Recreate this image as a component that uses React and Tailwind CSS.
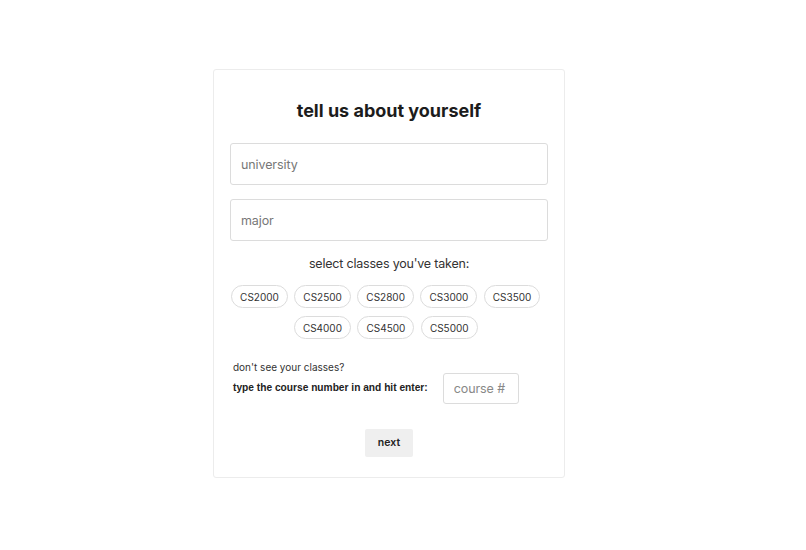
import { useState } from 'react'

const CLASSES = ['CS2000', 'CS2500', 'CS2800', 'CS3000', 'CS3500', 'CS4000', 'CS4500', 'CS5000']

export default function App() {
  const [selected, setSelected] = useState([])
  const [university, setUniversity] = useState('')
  const [major, setMajor] = useState('')
  const [course, setCourse] = useState('')

  const toggle = (c) =>
    setSelected((s) => (s.includes(c) ? s.filter((x) => x !== c) : [...s, c]))

  return (
    <div className="min-h-[550px] bg-white pt-[69px] pl-[213px] font-['Inter',sans-serif] text-[#222]">
      <div className="w-[352px] rounded-[3px] border border-[#ececec] px-[16px] pt-[28px] pb-[20px]">
        <h1 className="text-center text-[18px] font-bold leading-[26px] text-[#1c1c1c]">
          tell us about yourself
        </h1>

        <div className="mt-[19px] flex flex-col gap-[14px]">
          <input
            value={university}
            onChange={(e) => setUniversity(e.target.value)}
            placeholder="university"
            className="h-[42px] w-full rounded-[3px] border border-[#dcdcdc] px-[10px] text-[12.5px] tracking-[-0.1px] outline-none placeholder:text-[#777]"
          />
          <input
            value={major}
            onChange={(e) => setMajor(e.target.value)}
            placeholder="major"
            className="h-[42px] w-full rounded-[3px] border border-[#dcdcdc] px-[10px] text-[12.5px] tracking-[-0.1px] outline-none placeholder:text-[#777]"
          />
        </div>

        <p className="mt-[14px] text-center text-[12.5px] leading-[18px] tracking-[-0.2px] text-[#333]">
          select classes you've taken:
        </p>

        <div className="mt-[12px] flex flex-wrap justify-center gap-y-[8px]">
          {CLASSES.map((c) => (
            <button
              key={c}
              onClick={() => toggle(c)}
              className={`mr-[6.5px] h-[23px] rounded-full border px-[8px] text-[10px] leading-none ${
                selected.includes(c) ? 'border-[#999] bg-[#eee]' : 'border-[#dcdcdc] bg-white'
              } text-[#333]`}
            >
              {c}
            </button>
          ))}
        </div>

        <div className="mt-[21px] flex items-end pl-[3px]">
          <div className="flex flex-col">
            <span className="text-[10px] leading-[15px] text-[#333]">don't see your classes?</span>
            <span className="mt-[6px] mb-[9px] font-['Liberation_Sans',Arial,sans-serif] text-[10.2px] font-bold leading-[14px] text-[#222]">
              type the course number in and hit enter:
            </span>
          </div>
          <input
            value={course}
            onChange={(e) => setCourse(e.target.value)}
            placeholder="course #"
            className="ml-[15px] h-[31px] w-[76px] rounded-[3px] border border-[#dcdcdc] px-[10px] text-[12.5px] tracking-[-0.1px] outline-none placeholder:text-[#888]"
          />
        </div>

        <div className="mt-[25px] flex justify-center">
          <button className="h-[28px] w-[48px] rounded-[2px] bg-[#efefef] text-[10.5px] font-semibold text-[#222]">
            next
          </button>
        </div>
      </div>
    </div>
  )
}
